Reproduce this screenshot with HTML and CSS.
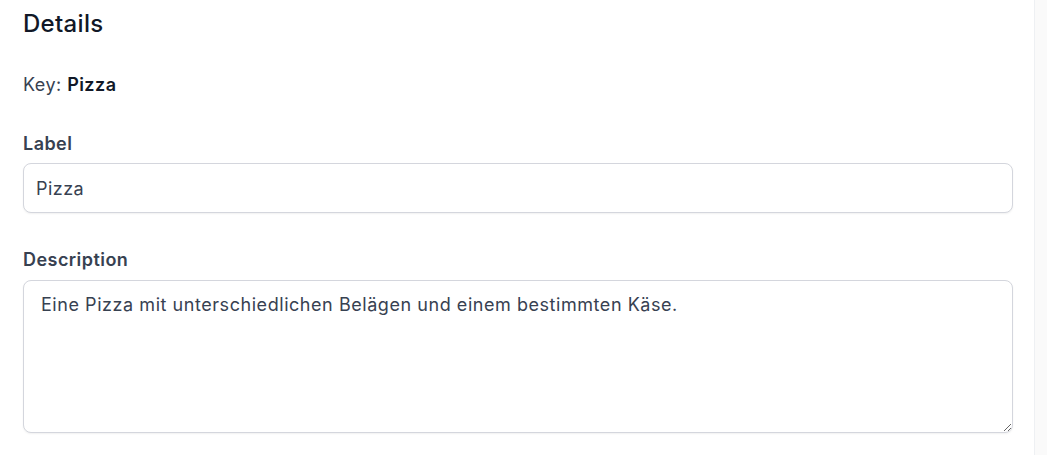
FILE: index.html
```html
<!DOCTYPE html>
<html lang="de">
<head>
<meta charset="utf-8">
<title>Details</title>
<link rel="stylesheet" href="styles.css">
</head>
<body>
<div class="page">
  <main class="content">
    <h1 class="title">Details</h1>
    <p class="key">Key: <strong>Pizza</strong></p>
    <div class="field">
      <label class="field-label" for="label">Label</label>
      <input class="input" id="label" type="text" value="Pizza">
    </div>
    <div class="field">
      <label class="field-label" for="desc">Description</label>
      <textarea class="textarea" id="desc">Eine Pizza mit unterschiedlichen Belägen und einem bestimmten Käse.</textarea>
    </div>
  </main>
  <div class="side-strip"></div>
</div>
</body>
</html>
```

FILE: styles.css
```css
* { box-sizing: border-box; }
html, body {
  margin: 0;
  padding: 0;
  background: #ffffff;
  font-family: Inter, "Noto Sans", Arial, sans-serif;
}
.page {
  display: flex;
  min-height: 455px;
}
.content {
  flex: 0 0 auto;
  width: 1013px;
  padding: 8px 0 0 23px;
}
.side-strip {
  flex: 1 1 auto;
  margin-left: 21px;
  border-left: 1px solid #eef0f3;
  background: #fafafa;
}
.title {
  margin: 0;
  font-size: 24px;
  line-height: 32px;
  font-weight: 500;
  letter-spacing: 0.3px;
  color: #111827;
}
.key {
  margin: 31px 0 0;
  font-size: 18px;
  line-height: 28px;
  letter-spacing: 0.45px;
  color: #374151;
}
.key strong {
  font-weight: 600;
  color: #111827;
}
.field {
  display: flex;
  flex-direction: column;
  gap: 5px;
  margin-top: 31px;
}
.field + .field {
  margin-top: 33px;
  gap: 6px;
}
.field-label {
  font-size: 18px;
  line-height: 28px;
  font-weight: 600;
  letter-spacing: 0.45px;
  color: #374151;
}
.input, .textarea {
  width: 990px;
  font-family: inherit;
  font-size: 18px;
  line-height: 28px;
  letter-spacing: 0.45px;
  color: #374151;
  border: 1px solid #d4d6dd;
  border-radius: 8px;
  background: #fff;
  box-shadow: 0 1px 2px rgba(0, 0, 0, 0.06);
  outline: none;
  margin: 0;
}
.input {
  height: 50px;
  padding: 0 12px;
}
.textarea {
  height: 153px;
  padding: 10px 17px 5px;
  letter-spacing: 0.55px;
  resize: vertical;
  display: block;
}
```
